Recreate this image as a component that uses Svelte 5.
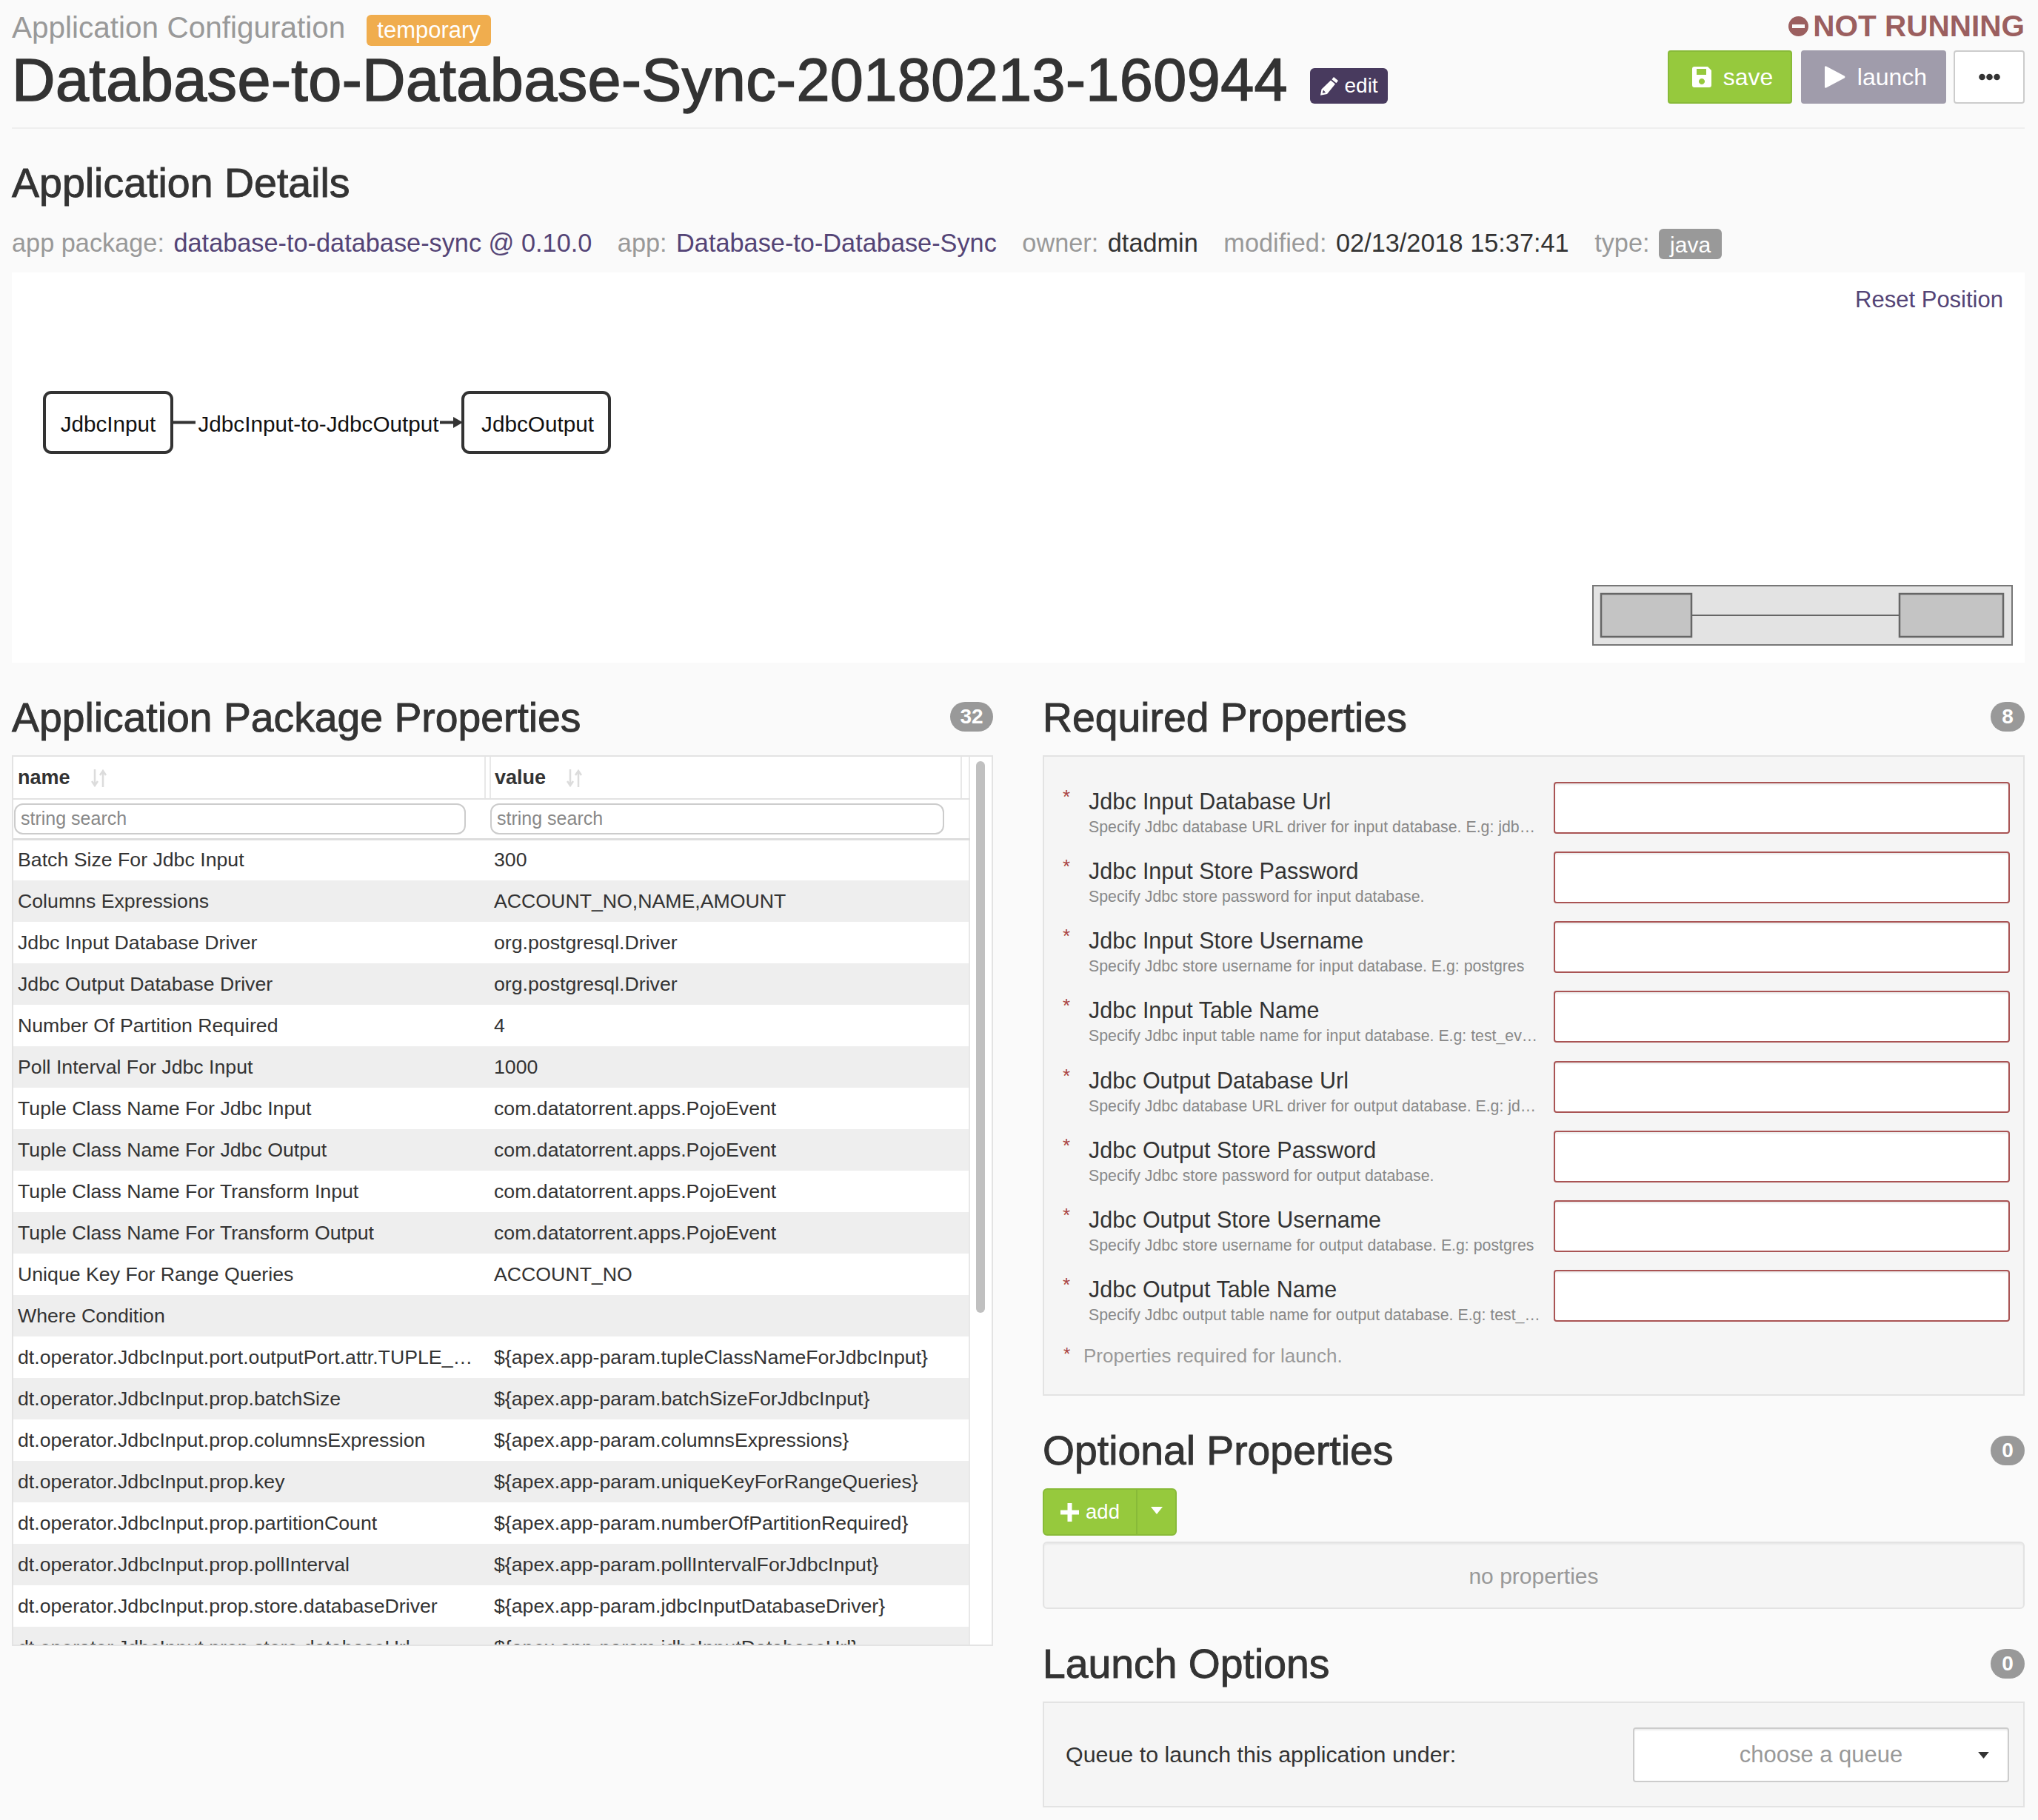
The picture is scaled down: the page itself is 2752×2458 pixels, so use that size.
<script>
  const rows = [
    ['Batch Size For Jdbc Input', '300'],
    ['Columns Expressions', 'ACCOUNT_NO,NAME,AMOUNT'],
    ['Jdbc Input Database Driver', 'org.postgresql.Driver'],
    ['Jdbc Output Database Driver', 'org.postgresql.Driver'],
    ['Number Of Partition Required', '4'],
    ['Poll Interval For Jdbc Input', '1000'],
    ['Tuple Class Name For Jdbc Input', 'com.datatorrent.apps.PojoEvent'],
    ['Tuple Class Name For Jdbc Output', 'com.datatorrent.apps.PojoEvent'],
    ['Tuple Class Name For Transform Input', 'com.datatorrent.apps.PojoEvent'],
    ['Tuple Class Name For Transform Output', 'com.datatorrent.apps.PojoEvent'],
    ['Unique Key For Range Queries', 'ACCOUNT_NO'],
    ['Where Condition', ''],
    ['dt.operator.JdbcInput.port.outputPort.attr.TUPLE_…', '${apex.app-param.tupleClassNameForJdbcInput}'],
    ['dt.operator.JdbcInput.prop.batchSize', '${apex.app-param.batchSizeForJdbcInput}'],
    ['dt.operator.JdbcInput.prop.columnsExpression', '${apex.app-param.columnsExpressions}'],
    ['dt.operator.JdbcInput.prop.key', '${apex.app-param.uniqueKeyForRangeQueries}'],
    ['dt.operator.JdbcInput.prop.partitionCount', '${apex.app-param.numberOfPartitionRequired}'],
    ['dt.operator.JdbcInput.prop.pollInterval', '${apex.app-param.pollIntervalForJdbcInput}'],
    ['dt.operator.JdbcInput.prop.store.databaseDriver', '${apex.app-param.jdbcInputDatabaseDriver}'],
    ['dt.operator.JdbcInput.prop.store.databaseUrl', '${apex.app-param.jdbcInputDatabaseUrl}']
  ];
  const required = [
    ['Jdbc Input Database Url', 'Specify Jdbc database URL driver for input database. E.g: jdb…'],
    ['Jdbc Input Store Password', 'Specify Jdbc store password for input database.'],
    ['Jdbc Input Store Username', 'Specify Jdbc store username for input database. E.g: postgres'],
    ['Jdbc Input Table Name', 'Specify Jdbc input table name for input database. E.g: test_ev…'],
    ['Jdbc Output Database Url', 'Specify Jdbc database URL driver for output database. E.g: jd…'],
    ['Jdbc Output Store Password', 'Specify Jdbc store password for output database.'],
    ['Jdbc Output Store Username', 'Specify Jdbc store username for output database. E.g: postgres'],
    ['Jdbc Output Table Name', 'Specify Jdbc output table name for output database. E.g: test_…']
  ];
</script>

<div class="page">
  <header class="top">
    <div class="top-left">
      <div class="crumb">
        <span class="crumb-text">Application Configuration</span>
        <span class="temp">temporary</span>
      </div>
      <div class="title-row">
        <h1>Database-to-Database-Sync-20180213-160944</h1>
        <button class="edit">
          <svg width="26" height="26" viewBox="0 0 26 26"><path fill="#fff" d="M19 1l6 5-2.6 3.2-6-5zM15 5.500l6 5L10 24l-9 1.800 1.500-8.300zM5 18.500l-1.300 4.300 4.300-.9z" fill-rule="evenodd"/></svg>
          edit
        </button>
      </div>
    </div>
    <div class="top-right">
      <div class="status">
        <svg width="27" height="27" viewBox="0 0 27 27"><circle cx="13.500" cy="13.500" r="13.500" fill="#9b5f5f"/><rect x="5" y="11" width="17" height="5" fill="#fafafa"/></svg>
        <span>NOT RUNNING</span>
      </div>
      <div class="actions">
        <button class="btn save">
          <svg width="26" height="28" viewBox="0 0 26 28"><path fill-rule="evenodd" fill="#fff" d="M3 0h18l5 5v20a3 3 0 0 1-3 3H3a3 3 0 0 1-3-3V3a3 3 0 0 1 3-3zM6 3v8h13V3zM13 16a4 4 0 1 0 .01 0z"/></svg>
          save
        </button>
        <button class="btn launch">
          <svg width="28" height="32" viewBox="0 0 28 32"><path fill="#fff" d="M2 1.500 26.500 14.500a1.700 1.700 0 0 1 0 3L2 30.500A1.300 1.300 0 0 1 0 29.500V2.500A1.300 1.300 0 0 1 2 1.500z"/></svg>
          launch
        </button>
        <button class="btn more" aria-label="more">
          <svg width="29" height="10" viewBox="0 0 29 10"><circle cx="4.500" cy="5" r="4.300" fill="#333"/><circle cx="14.500" cy="5" r="4.300" fill="#333"/><circle cx="24.500" cy="5" r="4.300" fill="#333"/></svg>
        </button>
      </div>
    </div>
  </header>

  <h2 class="details-h">Application Details</h2>
  <div class="meta">
    <span class="k">app package:</span><a class="v link">database-to-database-sync @ 0.10.0</a>
    <span class="k">app:</span><a class="v link">Database-to-Database-Sync</a>
    <span class="k">owner:</span><span class="v">dtadmin</span>
    <span class="k">modified:</span><span class="v">02/13/2018 15:37:41</span>
    <span class="k">type:</span><span class="java">java</span>
  </div>

  <div class="canvas">
    <a class="reset">Reset Position</a>
    <svg class="graph" width="860" height="130" viewBox="0 0 860 130">
      <rect x="44" y="32" width="172" height="81" rx="9" fill="#fff" stroke="#333" stroke-width="4"/>
      <rect x="609" y="32" width="198" height="81" rx="9" fill="#fff" stroke="#333" stroke-width="4"/>
      <path d="M218 72.500h30M578 72.500h20" stroke="#333" stroke-width="4" fill="none"/>
      <path d="M596 65l13 7.500-13 7.500z" fill="#333"/>
      <text x="130" y="84.500" text-anchor="middle" class="gt">JdbcInput</text>
      <text x="414" y="84.500" text-anchor="middle" class="gt">JdbcInput-to-JdbcOutput</text>
      <text x="710" y="84.500" text-anchor="middle" class="gt">JdbcOutput</text>
    </svg>
    <svg class="mini" width="568" height="82" viewBox="0 0 568 82">
      <rect x="1" y="1" width="566" height="80" fill="#e3e3e3" stroke="#777" stroke-width="2"/>
      <rect x="12" y="12" width="122" height="58" fill="#c4c4c4" stroke="#666" stroke-width="2.500"/>
      <rect x="415" y="12" width="140" height="58" fill="#c4c4c4" stroke="#666" stroke-width="2.500"/>
      <path d="M135 41H414" stroke="#666" stroke-width="2"/>
    </svg>
  </div>

  <div class="cols">
    <section>
      <div class="sec-head"><h2>Application Package Properties</h2><span class="count">32</span></div>
      <div class="table-box">
        <table>
          <colgroup><col class="c1"/><col class="c2"/></colgroup>
          <thead>
            <tr class="names">
              <th>name<svg class="sort" width="22" height="24" viewBox="0 0 22 24"><path d="M5 0v20M1 16l4 6 4-6M16 24V4M12 8l4-6 4 6" stroke="#dcdcdc" stroke-width="2.500" fill="none"/></svg></th>
              <th>value<svg class="sort" width="22" height="24" viewBox="0 0 22 24"><path d="M5 0v20M1 16l4 6 4-6M16 24V4M12 8l4-6 4 6" stroke="#dcdcdc" stroke-width="2.500" fill="none"/></svg></th>
            </tr>
            <tr class="filters">
              <th><input class="f1" placeholder="string search"/></th>
              <th><input class="f2" placeholder="string search"/></th>
            </tr>
          </thead>
          <tbody>
            {#each rows as r}
              <tr><td>{r[0]}</td><td>{r[1]}</td></tr>
            {/each}
          </tbody>
        </table>
        <div class="scroll"></div>
      </div>
    </section>

    <section>
      <div class="sec-head"><h2>Required Properties</h2><span class="count one">8</span></div>
      <div class="panel required">
        {#each required as p}
          <div class="prop">
            <span class="star">*</span>
            <div class="prop-text">
              <div class="prop-label">{p[0]}</div>
              <div class="prop-desc">{p[1]}</div>
            </div>
            <input class="prop-input"/>
          </div>
        {/each}
        <div class="note"><span class="star small">*</span>Properties required for launch.</div>
      </div>

      <div class="sec-head optional"><h2>Optional Properties</h2><span class="count one">0</span></div>
      <div class="add">
        <span class="add-main">
          <svg width="25" height="25" viewBox="0 0 25 25"><path d="M9.500 0h6v9.500H25v6h-9.500V25h-6v-9.500H0v-6h9.500z" fill="#fff"/></svg>
          add
        </span>
        <span class="add-caret"><svg width="16" height="10" viewBox="0 0 16 10"><path d="M0 0h16L8 10z" fill="#fff"/></svg></span>
      </div>
      <div class="noprops">no properties</div>

      <div class="sec-head launch-h"><h2>Launch Options</h2><span class="count one">0</span></div>
      <div class="panel launchp">
        <span class="q">Queue to launch this application under:</span>
        <div class="select">
          <span>choose a queue</span>
          <svg width="15" height="9" viewBox="0 0 18 11"><path d="M0 0h18L9 11z" fill="#333"/></svg>
        </div>
      </div>
    </section>
  </div>
</div>

<style>
  :global(body) {
    margin: 0;
    background: #fafafa;
    font-family: "Liberation Sans", Arial, sans-serif;
    color: #333;
  }
  .page {
    padding: 0 18px 0 16px;
    min-height: 2458px;
    box-sizing: border-box;
  }
  h1, h2 { margin: 0; }
  button { font-family: inherit; }

  .top {
    display: flex;
    justify-content: space-between;
    align-items: flex-start;
    height: 174px;
    box-sizing: border-box;
    border-bottom: 2px solid #eee;
  }
  .crumb {
    display: flex;
    align-items: flex-start;
    padding-top: 20px;
    height: 42px;
  }
  .crumb-text { font-size: 40.500px; color: #999; line-height: 34px; }
  .temp {
    margin-left: 29px;
    background: #f0ad4e;
    color: #fff;
    font-size: 31px;
    height: 42px;
    line-height: 42px;
    padding: 0 14px;
    border-radius: 6px;
  }
  .title-row { display: flex; align-items: flex-start; }
  h1 {
    font-size: 81px;
    line-height: 92px;
    letter-spacing: .4px;
    font-weight: 400;
    -webkit-text-stroke: 1.5px #333;
    white-space: nowrap;
  }
  .edit {
    margin: 30px 0 0 30px;
    width: 105px;
    height: 48px;
    padding: 0;
    border: 0;
    border-radius: 6px;
    background: #483a5e;
    color: #fff;
    font-size: 28px;
    display: flex;
    align-items: center;
    justify-content: center;
    gap: 7px;
  }
  .top-right { display: flex; flex-direction: column; align-items: flex-end; }
  .status {
    display: flex;
    align-items: center;
    gap: 6px;
    color: #9b5f5f;
    font-size: 40.500px;
    font-weight: 700;
    height: 46px;
    margin-top: 12px;
  }
  .actions { display: flex; gap: 10px; margin-top: 10px; }
  .btn {
    height: 72px;
    box-sizing: border-box;
    border-radius: 4px;
    font-size: 32px;
    color: #fff;
    display: flex;
    align-items: center;
    justify-content: center;
    gap: 16px;
    padding: 0;
  }
  .save { width: 168px; margin-right: 2px; padding-left: 7px; background: #96c93d; border: 2px solid #88ba38; }
  .launch { width: 196px; padding-left: 6px; background: #a09cab; border: 2px solid #a09cab; }
  .more { width: 96px; background: #fff; border: 2px solid #ccc; }

  .details-h {
    margin-top: 43px;
    font-size: 55.500px;
    line-height: 60px;
    font-weight: 400;
    -webkit-text-stroke: .9px #333;
  }
  .meta {
    margin-top: 30px;
    height: 41px;
    display: flex;
    align-items: center;
    font-size: 34.300px;
    line-height: 42px;
    white-space: nowrap;
  }
  .k { color: #999; margin-right: 12.500px; }
  .v { margin-right: 34.500px; color: #333; }
  .link { color: #544476; }
  .java {
    background: #999;
    color: #fff;
    font-size: 30px;
    height: 41px;
    line-height: 43px;
    padding: 0 15px;
    border-radius: 6px;
    margin-top: 4px;
  }

  .canvas {
    position: relative;
    margin-top: 20px;
    height: 527px;
    background: #fff;
  }
  .reset {
    position: absolute;
    right: 29px;
    top: 17px;
    font-size: 31px;
    line-height: 40px;
    color: #544476;
  }
  .graph { position: absolute; left: 0; top: 130px; }
  .gt { font-size: 29.700px; fill: #111; font-family: "Liberation Sans", Arial, sans-serif; }
  .mini { position: absolute; left: 2134px; top: 422px; }

  .cols {
    display: grid;
    grid-template-columns: 1325px 1326px;
    column-gap: 67px;
  }
  .sec-head {
    display: flex;
    justify-content: space-between;
    align-items: flex-start;
    margin-top: 44px;
    height: 60px;
  }
  .sec-head h2 {
    font-size: 55.300px;
    line-height: 60px;
    font-weight: 400;
    -webkit-text-stroke: .9px #333;
  }
  .count {
    margin-top: 9px;
    height: 40px;
    line-height: 40px;
    width: 58px;
    text-align: center;
    border-radius: 20px;
    background: #999;
    color: #fff;
    font-size: 28px;
    font-weight: 700;
  }
  .count.one { width: 46px; }

  .table-box {
    position: relative;
    margin-top: 21px;
    height: 1203px;
    box-sizing: border-box;
    border: 2px solid #e3e3e3;
    background: #fff;
    overflow: hidden;
  }
  table {
    table-layout: fixed;
    width: 1292px;
    border-collapse: collapse;
    font-size: 26.700px;
    border-right: 2px solid #e8e8e8;
  }
  .c1 { width: 637px; }
  th, td { padding: 0 8px; text-align: left; white-space: nowrap; overflow: hidden; }
  .names th {
    height: 57px;
    border-bottom: 2px solid #e3e3e3;
    border-right: 2px solid #e8e8e8;
    font-weight: 700;
    font-size: 27px;
    padding-left: 6px;
    box-sizing: border-box;
  }
  .names th + th {
    padding-left: 12px;
    background:
      linear-gradient(#e8e8e8, #e8e8e8) 5px 0 / 2px 100% no-repeat,
      linear-gradient(#e8e8e8, #e8e8e8) calc(100% - 9px) 0 / 2px 100% no-repeat;
  }
  .sort { margin-left: 28px; vertical-align: -4px; }
  .filters th { height: 54px; padding: 0; border-bottom: 3px solid #ddd; box-sizing: border-box; }
  input {
    font-family: inherit;
    box-sizing: border-box;
    display: block;
  }
  .filters input {
    height: 42px;
    border: 2px solid #ccc;
    border-radius: 12px;
    background: #fff;
    font-size: 25px;
    padding: 0 7px;
    margin-bottom: 0;
  }
  .f1 { width: 610px; margin-left: 1px; }
  .f2 { width: 613px; margin-left: 7px; }
  ::placeholder { color: #888; opacity: 1; }
  tbody td { height: 56px; padding: 0 6px; box-sizing: border-box; }
  tbody td + td { padding-left: 12px; }
  tbody tr:nth-child(even) { background: #eee; }
  .scroll {
    position: absolute;
    left: 1300px;
    top: 6px;
    width: 12px;
    height: 745px;
    border-radius: 6px;
    background: #c0c0c0;
  }

  .panel {
    background: #f5f5f5;
    border: 2px solid #e3e3e3;
    box-sizing: border-box;
  }
  section > .panel { margin-top: 21px; }
  .required { height: 865px; padding: 34px 18px 0 0; }
  .prop { display: flex; height: 70px; margin-bottom: 24.150px; }
  .star {
    width: 28px;
    margin-left: 32px;
    color: #a94442;
    font-size: 26px;
    line-height: 30px;
    margin-top: 5px;
    flex: none;
    text-indent: -7px;
  }
  .prop-text { width: 628px; flex: none; }
  .prop-label { font-size: 30.500px; line-height: 40px; margin-top: 6px; white-space: nowrap; }
  .prop-desc { font-size: 21.300px; line-height: 28px; margin-top: 1px; color: #888; white-space: nowrap; }
  .prop-input {
    width: 616px;
    height: 70px;
    flex: none;
    background: #fff;
    border: 2px solid #a95454;
    border-radius: 4px;
    box-shadow: inset 0 2px 2px rgba(0, 0, 0, .075);
  }
  .note {
    display: flex;
    font-size: 26px;
    line-height: 34px;
    color: #999;
    margin-top: 29px;
  }
  .star.small { width: 20px; margin-left: 33px; margin-top: 0; font-size: 24px; }

  .sec-head.optional { margin-top: 44px; }
  .sec-head.optional .count, .sec-head.launch-h .count { margin-top: 10px; }
  .add {
    display: flex;
    margin-top: 21px;
    height: 64px;
    width: 181px;
    box-sizing: border-box;
    background: #96c93d;
    border: 2px solid #88ba38;
    border-radius: 6px;
    color: #fff;
    font-size: 27.500px;
  }
  .add-main {
    width: 124px;
    display: flex;
    align-items: center;
    justify-content: center;
    gap: 9px;
    border-right: 2px solid #88ba38;
  }
  .add-caret { flex: 1; display: flex; align-items: center; justify-content: center; padding-bottom: 4px; }
  .noprops {
    margin-top: 8px;
    height: 91px;
    box-sizing: border-box;
    background: #f5f5f5;
    border: 2px solid #e3e3e3;
    border-radius: 6px;
    text-align: center;
    line-height: 89px;
    font-size: 30px;
    color: #999;
    box-shadow: inset 0 2px 2px rgba(0, 0, 0, .05);
  }
  .sec-head.launch-h { margin-top: 44px; }
  .launchp {
    height: 143px;
    display: flex;
    align-items: center;
    justify-content: space-between;
    padding: 0 19px 0 29px;
  }
  .q { font-size: 30.400px; }
  .select {
    position: relative;
    width: 508px;
    height: 74px;
    box-sizing: border-box;
    background: #fff;
    border: 2px solid #ccc;
    border-radius: 4px;
    font-size: 31px;
    color: #999;
    display: flex;
    align-items: center;
    justify-content: center;
    box-shadow: inset 0 2px 2px rgba(0, 0, 0, .075);
  }
  .select svg { position: absolute; right: 25px; top: 31px; }
</style>
